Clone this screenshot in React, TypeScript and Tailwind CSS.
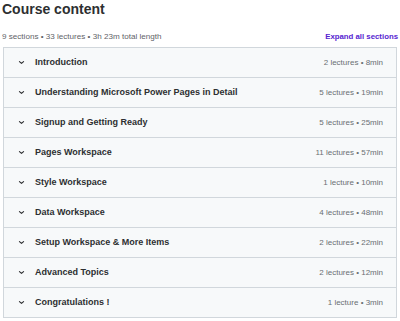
import React from 'react';

interface Section {
  title: string;
  meta: string;
}

const sections: Section[] = [
  { title: 'Introduction', meta: '2 lectures • 8min' },
  { title: 'Understanding Microsoft Power Pages in Detail', meta: '5 lectures • 19min' },
  { title: 'Signup and Getting Ready', meta: '5 lectures • 25min' },
  { title: 'Pages Workspace', meta: '11 lectures • 57min' },
  { title: 'Style Workspace', meta: '1 lecture • 10min' },
  { title: 'Data Workspace', meta: '4 lectures • 48min' },
  { title: 'Setup Workspace & More Items', meta: '2 lectures • 22min' },
  { title: 'Advanced Topics', meta: '2 lectures • 12min' },
  { title: 'Congratulations !', meta: '1 lecture • 3min' },
];

const Chevron = () => (
  <svg width="7" height="7" viewBox="0 0 24 24" fill="none" stroke="#2d2f31" strokeWidth="4" strokeLinecap="round" strokeLinejoin="round">
    <path d="M5 9l7 6 7-6" />
  </svg>
);

const App = () => {
  return (
    <div className="w-[400px] h-[321px] bg-white text-[#2d2f31] overflow-hidden" style={{ fontFamily: '"Liberation Sans", Arial, sans-serif' }}>
      <div className="px-[2px] pt-[1px]">
        <h2 className="text-[14px] font-bold leading-[17px]">Course content</h2>
        <div className="flex justify-between items-center mt-[12px] h-[14px]">
          <span className="text-[8.1px] text-[#5f6368]">9 sections • 33 lectures • 3h 23m total length</span>
          <button className="text-[7.8px] font-bold text-[#5624d0]">Expand all sections</button>
        </div>
      </div>
      <div className="mx-[3px] mt-[3px] border border-[#d1d7dc]">
        {sections.map((s, i) => (
          <div
            key={s.title}
            className={`flex items-center bg-[#f7f9fa] pl-[14px] pr-[13px] ${i < sections.length - 1 ? 'h-[30px] border-b border-[#d1d7dc]' : 'h-[29px]'}`}
          >
            <Chevron />
            <span className="ml-[10px] text-[9px] font-bold flex-1 pt-[1px]">{s.title}</span>
            <span className="text-[8px] text-[#6a6f73] pt-[1px]">{s.meta}</span>
          </div>
        ))}
      </div>
    </div>
  );
};

export default App;
